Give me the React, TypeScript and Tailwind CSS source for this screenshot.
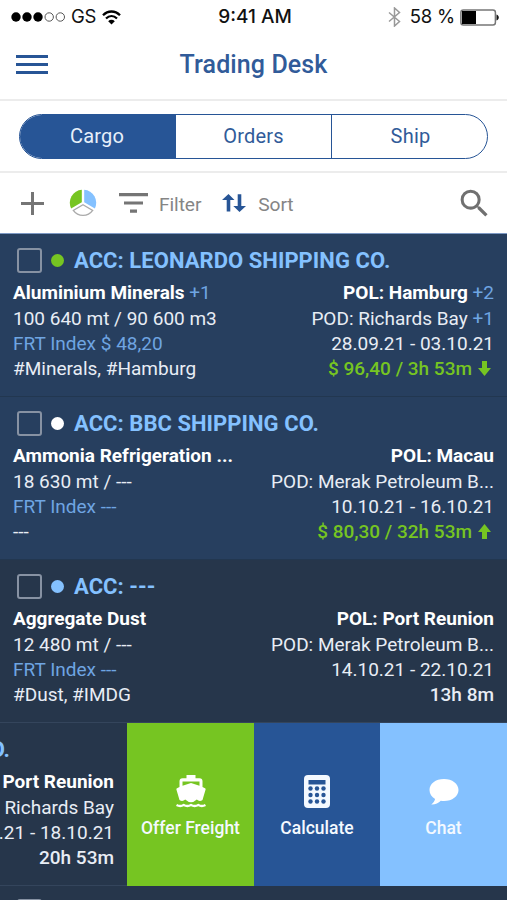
import type { ReactNode } from "react";
import clsx from "clsx";
import { MdSearch } from "react-icons/md";

interface Cargo {
  account: string;
  dot: string;
  unread: boolean;
  name: string;
  nameExtra?: string;
  quantity: string;
  index: string;
  tags: string;
  pol: string;
  polExtra?: string;
  pod: string;
  podExtra?: string;
  laycan: string;
  left: string;
  trend?: "up" | "down";
}

const cargos: Cargo[] = [
  {
    account: "ACC: LEONARDO SHIPPING CO.",
    dot: "bg-[#76c522]",
    unread: true,
    name: "Aluminium Minerals",
    nameExtra: "+1",
    quantity: "100 640 mt / 90 600 m3",
    index: "FRT Index $ 48,20",
    tags: "#Minerals, #Hamburg",
    pol: "POL: Hamburg",
    polExtra: "+2",
    pod: "POD: Richards Bay",
    podExtra: "+1",
    laycan: "28.09.21 - 03.10.21",
    left: "$ 96,40 / 3h 53m",
    trend: "down",
  },
  {
    account: "ACC: BBC SHIPPING CO.",
    dot: "bg-white",
    unread: true,
    name: "Ammonia Refrigeration ...",
    quantity: "18 630 mt / ---",
    index: "FRT Index ---",
    tags: "---",
    pol: "POL: Macau",
    pod: "POD: Merak Petroleum B...",
    laycan: "10.10.21 - 16.10.21",
    left: "$ 80,30 / 32h 53m",
    trend: "up",
  },
  {
    account: "ACC: ---",
    dot: "bg-[#84c1ff]",
    unread: false,
    name: "Aggregate Dust",
    quantity: "12 480 mt / ---",
    index: "FRT Index ---",
    tags: "#Dust, #IMDG",
    pol: "POL: Port Reunion",
    pod: "POD: Merak Petroleum B...",
    laycan: "14.10.21 - 22.10.21",
    left: "13h 8m",
  },
];

function StatusBar() {
  return (
    <div className="grid h-[34px] grid-cols-3 items-center pr-[8px] pl-[11px] font-['Inter',sans-serif] text-[18.5px] text-[#111]">
      <div className="flex items-center">
        <svg width="55" height="12" viewBox="0 0 55 12">
          <circle cx="5" cy="6" r="4.7" fill="#000" />
          <circle cx="16" cy="6" r="4.7" fill="#000" />
          <circle cx="27" cy="6" r="4.7" fill="#000" />
          <circle cx="38.2" cy="6" r="4.2" fill="none" stroke="#555" />
          <circle cx="49.3" cy="6" r="4.2" fill="none" stroke="#555" />
        </svg>
        <span className="ml-[5px] tracking-[-0.2px]">GS</span>
        <svg className="ml-[6px]" width="19" height="15" viewBox="0 0 19 15">
          <g fill="none" stroke="#000" strokeWidth="2.3">
            <path d="M1 5.3C6 .2 13 .2 18 5.3" />
            <path d="M4 8.5c3.3-3.1 7.7-3.1 11 0" />
          </g>
          <path d="M9.5 14.5 6.2 11.2c1.9-1.8 4.7-1.8 6.6 0z" fill="#000" />
        </svg>
      </div>
      <div className="text-center text-[19px] font-medium">9:41 AM</div>
      <div className="flex items-center justify-end">
        <svg width="13" height="20" viewBox="0 0 13 20">
          <path d="m1 5.5 10.5 9L6.5 19V1l5 4.5L1 14.5" fill="none" stroke="#999" strokeWidth="1.5" />
        </svg>
        <span className="ml-[9px] tracking-[-0.2px] whitespace-nowrap">58 %</span>
        <svg className="ml-[5px]" width="39" height="17" viewBox="0 0 39 17">
          <rect x=".9" y=".9" width="34.5" height="15" rx="2.5" fill="#fff" stroke="#777" strokeWidth="1.5" />
          <path d="M2 2h14v13H2z" fill="#000" />
          <path d="M36.5 5.5c3 1 3 5 0 6z" fill="#111" />
        </svg>
      </div>
    </div>
  );
}

function TopBar() {
  return (
    <header className="grid h-[67px] grid-cols-[60px_1fr_60px] items-center border-b-2 border-[#ececec] pb-[4px]">
      <button className="ml-4 flex w-8 flex-col gap-[5px]" aria-label="Menu">
        <span className="h-[3px] bg-[#275596]" />
        <span className="h-[3px] bg-[#275596]" />
        <span className="h-[3px] bg-[#275596]" />
      </button>
      <h1 className="text-center text-[25px] font-medium tracking-[0.1px] text-[#315b99]">Trading Desk</h1>
    </header>
  );
}

function Tabs() {
  return (
    <div className="h-[72px] border-b-2 border-[#ececec] px-[19px] pt-[13px]">
      <div className="grid h-[45px] grid-cols-[156px_156px_1fr] overflow-hidden rounded-full border-[1.5px] border-[#275596] text-[20px] tracking-[0.2px] text-[#315b99]">
        <button className="bg-[#275596] pr-[2px] pb-[1px] text-[#e8f0fa]">Cargo</button>
        <button className="border-r-[1.5px] border-[#275596] pb-[1px]">Orders</button>
        <button className="pb-[1px] pl-[2px]">Ship</button>
      </div>
    </div>
  );
}

function Toolbar() {
  return (
    <div className="flex h-[61px] items-center border-b border-[#7d99c4] pr-[14px] pl-[21px] text-[19.2px] text-[#858585]">
      <svg width="23" height="23" viewBox="0 0 23 23">
        <path d="M11.5 0v23M0 11.5h23" stroke="#757575" strokeWidth="3" />
      </svg>
      <svg className="ml-[25px]" width="28" height="28" viewBox="0 0 28 28">
        <path d="M12.8.8v12.4L2.1 19.4A13 13 0 0 1 12.8.8z" fill="#76c522" />
        <path d="M15.2.8v12.4l10.7 6.2A13 13 0 0 0 15.2.8z" fill="#84c1ff" />
        <path d="m14 15.8 9.7 5.6a12 12 0 0 1-19.4 0z" fill="#fff" stroke="#aaa" strokeWidth="1.3" />
      </svg>
      <svg className="ml-[22px]" width="29" height="20" viewBox="0 0 29 20">
        <path d="M0 1.7h29M5 10h19M11 18.2h7" stroke="#757575" strokeWidth="3.2" />
      </svg>
      <span className="ml-[11px] pt-[4px] tracking-[-0.1px]">Filter</span>
      <svg className="mb-[1px] ml-[21px]" width="24" height="18" viewBox="0 0 24 18">
        <path d="M4.7 17.5V6H0L6.5 0l6 6H8.3v11.5z" fill="#275596" />
        <path d="M15.7.2V12h-4.4l6.2 6L24 12h-4.7V.2z" fill="#275596" />
      </svg>
      <span className="ml-[12px] pt-[4px] tracking-[-0.1px]">Sort</span>
      <MdSearch className="ml-auto size-[37px] text-[#707070]" />
    </div>
  );
}

function Checkbox() {
  return <span className="size-[25px] shrink-0 rounded-[3px] border-2 border-[#8792a3]" />;
}

function TrendArrow({ trend }: { trend: "up" | "down" }) {
  return (
    <svg className={clsx("ml-[6px] mr-[3px]", trend === "up" && "rotate-180")} width="13" height="15" viewBox="0 0 13 15">
      <path d="M4 0h5v7h4L6.5 15 0 7h4z" fill="#76c522" />
    </svg>
  );
}

function CargoRow({ cargo }: { cargo: Cargo }) {
  return (
    <article
      className={clsx(
        "h-[163px] border-b px-[13px] pt-[13px]",
        cargo.unread ? "border-[#223750] bg-[#273f5f]" : "border-[#34455c] bg-[#26364b]"
      )}
    >
      <div className="flex h-[26px] items-center pl-[4px]">
        <Checkbox />
        <span className={clsx("ml-[9px] size-[13px] rounded-full", cargo.dot)} />
        <h2 className="ml-[10px] pt-[1px] text-[22px] font-bold tracking-[0.05px] text-[#84c1ff]">{cargo.account}</h2>
      </div>
      <div className="mt-[7.4px] flex justify-between text-[19px] leading-[25.3px] whitespace-nowrap text-[#e8edf5]">
        <div>
          <p className="font-bold text-white">
            {cargo.name} {cargo.nameExtra && <span className="font-normal text-[#6fa5e2]">{cargo.nameExtra}</span>}
          </p>
          <p>{cargo.quantity}</p>
          <p className="text-[#6fa5e2]">{cargo.index}</p>
          <p>{cargo.tags}</p>
        </div>
        <div className="text-right">
          <p className="font-bold text-white">
            {cargo.pol} {cargo.polExtra && <span className="font-normal text-[#6fa5e2]">{cargo.polExtra}</span>}
          </p>
          <p>
            {cargo.pod} {cargo.podExtra && <span className="text-[#6fa5e2]">{cargo.podExtra}</span>}
          </p>
          <p>{cargo.laycan}</p>
          <p className={clsx("flex items-center justify-end font-medium", cargo.trend && "text-[#76c522]")}>
            {cargo.left}
            {cargo.trend && <TrendArrow trend={cargo.trend} />}
          </p>
        </div>
      </div>
    </article>
  );
}

function Action({ className, label, children }: { className: string; label: string; children: ReactNode }) {
  return (
    <button className={clsx("flex flex-col items-center pt-[49px] text-[17.5px] font-medium text-[#f4f9ff]", className)}>
      <span className="flex h-[38px] items-center">{children}</span>
      <span className="mt-[5px]">{label}</span>
    </button>
  );
}

function SwipedRow() {
  return (
    <article className="grid h-[163px] grid-cols-[127px_127px_126px_127px]">
      <div className="overflow-hidden border-b border-[#34455c] bg-[#26364b] pt-[13px] pr-[13px] whitespace-nowrap text-[#e8edf5]">
        <div className="mr-[104px] flex h-[26px] items-center justify-end pt-[1px] text-[22px] font-bold text-[#84c1ff]">O.</div>
        <div className="mt-[7.4px] flex flex-col items-end text-[19px] leading-[25.3px]">
          <p className="font-bold text-white">Port Reunion</p>
          <p>Richards Bay</p>
          <p>.21 - 18.10.21</p>
          <p className="font-medium">20h 53m</p>
        </div>
      </div>
      <Action className="bg-[#76c522]" label="Offer Freight">
        <svg width="30" height="33" viewBox="0 0 30 33">
          <path
            fillRule="evenodd"
            d="M10.5 0h9v3.200h4a3 3 0 0 1 3 3v5.800l2.500 1.200q.8.5.6 1.400L26.500 25q-3 2.200-5.700-.5-2.900 2.700-5.800 2.700t-5.800-2.700Q6.500 27.200 3.500 25L.4 14.600q-.2-.9.600-1.400L3.500 12V6.200a3 3 0 0 1 3-3h4zM6.500 6.500v4.200L15 8l8.500 2.700V6.500z"
            fill="#fff"
          />
          <path d="M.5 30q3.600 2 7.200 0 3.650 2 7.300 0 3.650 2 7.300 0 3.600 2 7.200 0" fill="none" stroke="#fff" strokeWidth="2.4" />
        </svg>
      </Action>
      <Action className="bg-[#275596]" label="Calculate">
        <svg width="26" height="33" viewBox="0 0 26 33">
          <rect width="26" height="33" rx="4" fill="#f4f9ff" />
          <path d="M4.5 5h17v4.500h-17z" fill="#275596" />
          <g fill="#275596">
            {[13.5, 20, 26.5].map((y) =>
              [6.5, 13, 19.5].map((x) => <circle key={`${x}-${y}`} cx={x} cy={y} r="2.2" />)
            )}
          </g>
        </svg>
      </Action>
      <Action className="bg-[#84c1ff]" label="Chat">
        <svg className="mt-[3px]" width="30" height="27" viewBox="0 0 30 27">
          <path d="M15 0C6.500 0 .5 4.800.5 11c0 3.800 2.200 7 5.600 9-.5 2.200-1.800 3.700-3.800 5.500 3.700.2 7.200-1.300 9.500-3.800 1 .2 2.100.3 3.200.3 8.300 0 14.500-4.900 14.500-11S23.300 0 15 0z" fill="#fff" />
        </svg>
      </Action>
    </article>
  );
}

export default function App() {
  return (
    <div className="h-[900px] w-[507px] overflow-hidden bg-white font-['Roboto',sans-serif]">
      <StatusBar />
      <TopBar />
      <Tabs />
      <Toolbar />
      <main>
        {cargos.map((cargo) => (
          <CargoRow key={cargo.account} cargo={cargo} />
        ))}
        <SwipedRow />
        <div className="flex h-[40px] bg-[#26364b] pt-[13px] pl-[17px]">
          <Checkbox />
        </div>
      </main>
    </div>
  );
}
